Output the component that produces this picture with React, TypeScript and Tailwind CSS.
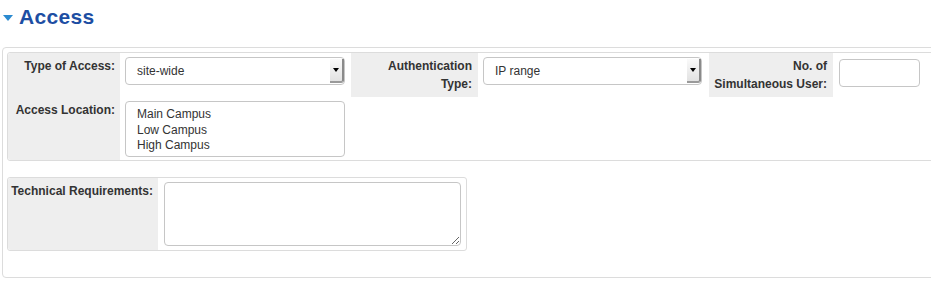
import React from 'react';

function FakeSelect({ value, width }: { value: string; width: string }) {
  return (
    <div className={`${width} h-[28px] flex items-stretch border border-[#c6c6c6] rounded-[4px] bg-white`}>
      <div className="flex-1 flex items-center pl-[11px] text-[12px] text-[#333]">{value}</div>
      <div className="w-[14px] my-[1px] flex items-center justify-center bg-gradient-to-b from-[#fafafa] to-[#e2e2e2] border-r-2 border-b-2 border-r-[#8a8a8a] border-b-[#9a9a9a] rounded-br-[3px]">
        <span className="block w-0 h-0 border-l-[3px] border-r-[3px] border-t-[4px] border-l-transparent border-r-transparent border-t-black" />
      </div>
    </div>
  );
}

export default function App() {
  const locations = ['Main Campus', 'Low Campus', 'High Campus'];

  return (
    <div className="w-[931px] h-[288px] overflow-hidden bg-white text-[12px] text-[#333] font-['Liberation_Sans',Arial,sans-serif]">
      <h2 className="flex items-center pt-[5px] h-[29px] leading-[24px]">
        <span className="ml-[3px] mr-[6px] mt-[1px] block w-0 h-0 border-l-[5px] border-r-[5px] border-t-[6px] border-l-transparent border-r-transparent border-t-[#2b8ad0]" />
        <span className="text-[21px] font-bold text-[#1d4ea3] tracking-[0.3px]">Access</span>
      </h2>

      <div className="mt-[18px] ml-[2px] w-[960px] h-[231px] border border-[#dcdcdc] rounded-[4px] pl-[4px] pt-[4px]">
        {/* access details */}
        <div className="w-[960px] border border-[#dcdcdc] rounded-l-[3px] grid grid-cols-[112px_231px_127px_231px_124px_1fr] grid-rows-[44px_63px]">
          <div className="row-span-2 bg-[#eeeeee] pt-[4px] pr-[5px] text-right font-bold leading-[18px] rounded-l-[3px]">
            <div className="h-[44px]">Type of Access:</div>
            <div>Access Location:</div>
          </div>
          <div className="pt-[4px] pl-[5px]">
            <FakeSelect value="site-wide" width="w-[220px]" />
          </div>
          <div className="bg-[#eeeeee] pt-[4px] pr-[6px] text-right font-bold leading-[18px]">
            Authentication<br />Type:
          </div>
          <div className="pt-[4px] pl-[5px]">
            <FakeSelect value="IP range" width="w-[219px]" />
          </div>
          <div className="bg-[#eeeeee] pt-[4px] pr-[6px] text-right font-bold leading-[18px]">
            No. of<br />Simultaneous User:
          </div>
          <div className="pt-[6px] pl-[6px]">
            <div className="w-[81px] h-[28px] border border-[#c6c6c6] rounded-[4px] bg-white" />
          </div>

          <div className="pt-[4px] pl-[5px] col-start-2">
            <div className="w-[220px] h-[56px] border border-[#c6c6c6] rounded-[4px] bg-white pl-[11px] pt-[5px] leading-[15.5px]">
              {locations.map((l) => (
                <div key={l}>{l}</div>
              ))}
            </div>
          </div>
          <div className="col-span-4" />
        </div>

        {/* technical requirements */}
        <div className="mt-[16px] w-[460px] h-[74px] border border-[#dcdcdc] rounded-[3px] flex">
          <div className="w-[150px] bg-[#eeeeee] pt-[4px] pr-[5px] text-right font-bold leading-[18px] rounded-l-[3px]">
            Technical Requirements:
          </div>
          <div className="pt-[4px] pl-[6px]">
            <textarea className="block w-[297px] h-[64px] border border-[#c6c6c6] rounded-[4px] bg-white resize" />
          </div>
        </div>
      </div>
    </div>
  );
}
